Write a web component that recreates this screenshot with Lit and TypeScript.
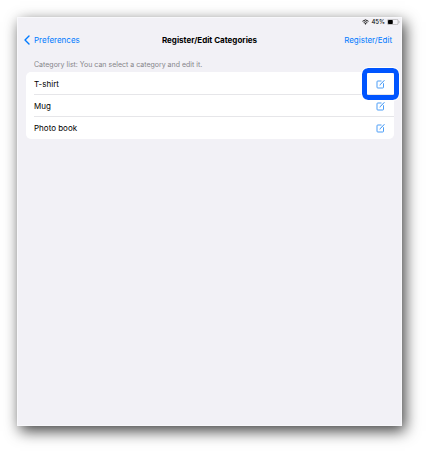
import { LitElement, html, css } from "lit";
import { customElement, property } from "lit/decorators.js";

@customElement("status-bar")
class StatusBar extends LitElement {
  static styles = css`
    :host {
      display: flex;
      align-items: center;
      justify-content: flex-end;
      gap: 2px;
      height: 10px;
      padding-right: 2px;
      font-size: 6px;
      font-weight: 500;
      color: #111;
    }
    svg {
      display: block;
    }
  `;
  render() {
    return html`
      <svg width="7" height="6" viewBox="0 0 14 12" aria-label="Wi-Fi">
        <path d="M1 4.6a8.6 8.6 0 0 1 12 0M3.3 7.2a5.3 5.3 0 0 1 7.4 0" fill="none" stroke="#111" stroke-width="1.9" />
        <path d="M4.8 8.9a3.2 3.2 0 0 1 4.4 0L7 11.4z" fill="#111" />
      </svg>
      <span>45%</span>
      <svg width="13" height="6" viewBox="0 0 26 12" aria-label="Battery">
        <rect x="0.7" y="0.7" width="21.6" height="10.6" rx="3" fill="none" stroke="#999" stroke-width="1.2" />
        <rect x="2" y="2" width="9.6" height="8" rx="1.4" fill="#000" />
        <path d="M23.8 4v4c1.6-.6 1.6-3.4 0-4z" fill="#999" />
      </svg>
    `;
  }
}

@customElement("category-row")
class CategoryRow extends LitElement {
  static styles = css`
    :host {
      display: block;
      padding-left: 8px;
    }
    .row {
      display: flex;
      align-items: center;
      justify-content: space-between;
      height: 22px;
      padding-right: 9px;
      box-sizing: border-box;
    }
    :host(:not(:last-of-type)) .row {
      border-bottom: 1px solid #e6e6e9;
    }
    .edit {
      position: relative;
      display: block;
      padding: 0;
      border: 0;
      background: none;
      color: #2c8cf5;
    }
    .edit svg {
      display: block;
    }
    .marker {
      position: absolute;
      inset: -11px -14px;
      border: 5px solid #0055ff;
      border-radius: 6px;
      outline: 1px solid #fff;
      pointer-events: none;
    }
  `;
  @property() declare name: string;
  @property({ type: Boolean }) declare highlighted: boolean;
  render() {
    return html`
      <div class="row">
        <span>${this.name}</span>
        <button class="edit" aria-label="Edit ${this.name}">
          <svg width="9" height="10" viewBox="0 0 18 20" fill="none" stroke="currentColor">
            <path d="M11 4H3.500Q2 4 2 5.500V16.500Q2 18 3.500 18H13.500Q15 18 15 16.500V8.500" stroke-width="1.700" />
            <path d="M16.800 2.500L9 10.600L7.800 12.800" stroke-width="2" />
          </svg>
          ${this.highlighted ? html`<span class="marker"></span>` : ""}
        </button>
      </div>
    `;
  }
}

@customElement("app-root")
class AppRoot extends LitElement {
  static styles = css`
    :host {
      display: flex;
      box-sizing: border-box;
      min-height: 100vh;
      padding: 17px 25px 25px 17px;
      background: #fff;
      color: #000;
      font: 8px/10px Inter, "Liberation Sans", sans-serif;
      overflow: hidden;
    }
    .screen {
      flex: 1;
      background: #f2f1f6;
      box-shadow: 3px 5px 14px rgba(0, 0, 0, 0.75), inset 0 0 0 1px #f8f8fb;
    }
    nav {
      display: grid;
      grid-template-columns: 1fr auto 1fr;
      align-items: center;
      height: 25px;
      padding: 0 10px;
    }
    .back,
    .action {
      padding: 0;
      border: 0;
      background: none;
      font: inherit;
      color: #007aff;
    }
    .back {
      display: flex;
      align-items: center;
      gap: 4px;
      justify-self: start;
      margin-left: -3px;
    }
    .action {
      justify-self: end;
    }
    h1 {
      margin: 0;
      font-size: 8px;
      font-weight: 700;
    }
    .content {
      padding: 8px 8px 0 9px;
    }
    .caption {
      margin: 0 0 2px;
      padding-left: 8px;
      font-size: 7px;
      color: #85858a;
    }
    .list {
      padding-top: 1px;
      background: #fff;
      border-radius: 5px;
    }
  `;
  render() {
    return html`
      <main class="screen">
        <status-bar></status-bar>
        <nav>
          <button class="back">
            <svg width="6" height="10" viewBox="0 0 6 10" fill="none" stroke="currentColor" stroke-width="1.4" stroke-linecap="round" stroke-linejoin="round">
              <path d="M5 1L1 5l4 4" />
            </svg>
            Preferences
          </button>
          <h1>Register/Edit Categories</h1>
          <button class="action">Register/Edit</button>
        </nav>
        <section class="content">
          <p class="caption">Category list: You can select a category and edit it.</p>
          <div class="list">
            <category-row name="T-shirt" highlighted></category-row>
            <category-row name="Mug"></category-row>
            <category-row name="Photo book"></category-row>
          </div>
        </section>
      </main>
    `;
  }
}
